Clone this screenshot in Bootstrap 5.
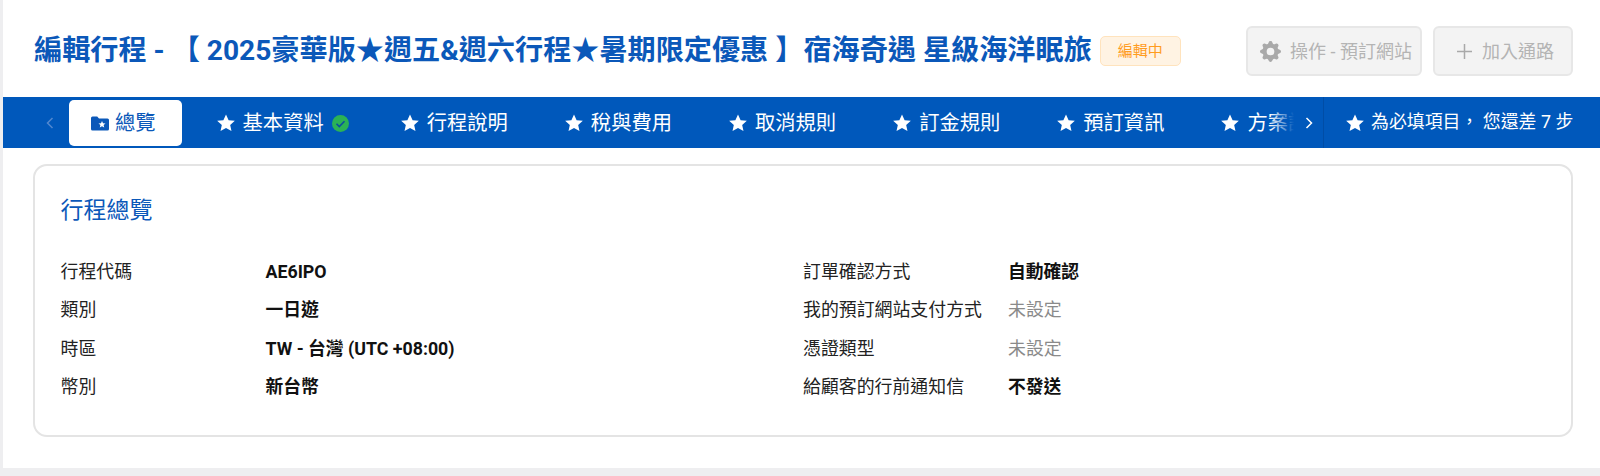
<!DOCTYPE html>
<html lang="zh-Hant">

<head>
    <meta charset="UTF-8">
    <meta name="viewport" content="width=device-width, initial-scale=1.0">
    <title>編輯行程</title>
    <link href="https://cdn.jsdelivr.net/npm/bootstrap@5.3.3/dist/css/bootstrap.min.css" rel="stylesheet">
    <style>
        body {
            background: #eeeef0;
            font-family: Roboto, "Noto Sans CJK TC", sans-serif;
            font-size: 17.9px;
            color: #222;
            overflow: hidden;
        }

        .page-wrap {
            background: #fff;
            margin-left: 2.5px;
            height: 468px;
        }

        .page-head {
            height: 97px;
            padding: 4px 27px 0 31.5px;
        }

        .page-title {
            font-size: 28.15px;
            font-weight: 700;
            color: #0b58b9;
            margin: 0;
            white-space: nowrap;
        }

        .state-tag {
            font-size: 15px;
            line-height: 28px;
            padding: 0 17px;
            margin-left: 8px;
            background: #fff3e3;
            border: 1px solid #ffe3bd;
            border-radius: 5px;
            color: #ff9c1f;
        }

        .head-btn,
        .head-btn:disabled {
            height: 50px;
            margin-top: 1px;
            font-size: 18px;
            background: #f3f3f3;
            border: 2px solid #e7e7e7;
            border-radius: 6px;
            color: #b4b4b4;
            opacity: 1;
            white-space: nowrap;
        }

        .btn-action {
            padding: 0 8px 0 12px;
            gap: 9px;
        }

        .btn-channel {
            margin-left: 10.5px;
            padding: 0 17px 0 22px;
            gap: 10.5px;
        }

        .tab-bar {
            height: 51px;
            background: #0058bb;
        }

        .tab-prev {
            width: 66.5px;
            padding-left: 43px;
        }

        .tab-scroll {
            width: 1225px;
            overflow: hidden;
        }

        .tab-scroll::after {
            content: "";
            position: absolute;
            top: 0;
            right: 0;
            bottom: 0;
            width: 24px;
            background: linear-gradient(to right, rgba(0, 88, 187, 0), #0058bb);
        }

        .tab-item {
            height: 46px;
            margin: 3px 13px 2px 0;
            padding: 0 22px;
            font-size: 20.3px;
            color: #fff;
            white-space: nowrap;
            flex-shrink: 0;
            border-radius: 5px;
            gap: 8px;
        }

        .tab-item.is-active {
            background: #fff;
            color: #0b58b9;
            padding-right: 26px;
            gap: 6px;
        }

        .tab-check {
            margin-right: -5px;
        }

        .tab-next {
            width: 30px;
            border-right: 1px solid #004da6;
        }

        .tab-summary {
            color: #fff;
            padding-left: 22px;
            gap: 7px;
            white-space: nowrap;
        }

        .info-panel {
            margin: 16px 27px 0 30.500px;
            height: 273px;
            border: 2px solid #e4e4e4;
            border-radius: 14px;
            padding: 28px 25.500px 0;
        }

        .info-title {
            font-size: 23px;
            font-weight: 400;
            color: #0b58b9;
            line-height: 34px;
            margin: 0 0 25px;
        }

        .info-row {
            height: 38.500px;
        }

        .info-label {
            width: 205px;
        }

        .info-value {
            font-size: 17.8px;
            font-weight: 700;
            color: #111;
        }

        .info-unset {
            color: #8a8a8a;
        }
    </style>
</head>

<body>
    <svg width="0" height="0" class="d-block">
        <symbol id="ic-star" viewBox="1 1 22 22">
            <path d="M12 1.5l3.2 7 7.6.8-5.7 5.1 1.6 7.5L12 18.1l-6.700 3.800 1.600-7.500L1.200 9.300l7.600-.8z" fill="currentColor"/>
        </symbol>
    </svg>
    <div class="page-wrap">
        <div class="page-head d-flex align-items-center">
            <h1 class="page-title">編輯行程 - 【 2025豪華版★週五&amp;週六行程★暑期限定優惠 】宿海奇遇 星級海洋眠旅</h1>
            <span class="state-tag">編輯中</span>
            <button class="btn head-btn btn-action d-flex align-items-center ms-auto" disabled>
                <svg width="21" height="21" viewBox="0 0 16 16" fill="#a9a9a9"><path d="M9.405 1.05c-.413-1.4-2.397-1.4-2.81 0l-.1.34a1.464 1.464 0 0 1-2.105.872l-.31-.17c-1.283-.698-2.686.705-1.987 1.987l.169.311c.446.82.023 1.841-.872 2.105l-.34.1c-1.4.413-1.4 2.397 0 2.81l.34.1a1.464 1.464 0 0 1 .872 2.105l-.17.31c-.698 1.283.705 2.686 1.987 1.987l.311-.169a1.464 1.464 0 0 1 2.105.872l.1.34c.413 1.4 2.397 1.4 2.81 0l.1-.34a1.464 1.464 0 0 1 2.105-.872l.31.17c1.283.698 2.686-.705 1.987-1.987l-.169-.311a1.464 1.464 0 0 1 .872-2.105l.34-.1c1.4-.413 1.4-2.397 0-2.81l-.34-.1a1.464 1.464 0 0 1-.872-2.105l.17-.31c.698-1.283-.705-2.686-1.987-1.987l-.311.169a1.464 1.464 0 0 1-2.105-.872l-.1-.34zM8 10.93a2.929 2.929 0 1 1 0-5.86 2.929 2.929 0 0 1 0 5.858z"/></svg>
                操作 - 預訂網站
            </button>
            <button class="btn head-btn btn-channel d-flex align-items-center" disabled>
                <svg width="15" height="15" viewBox="0 0 16 16" fill="none" stroke="#a9a9a9" stroke-width="1.6"><path d="M8 0v16M0 8h16"/></svg>
                加入通路
            </button>
        </div>

        <div class="tab-bar d-flex">
            <div class="tab-prev d-flex align-items-center">
                <svg width="8" height="12" viewBox="0 0 8 12" fill="none" stroke="#5288cf" stroke-width="1.500"><path d="M6.500 1L1.500 6l5 5"/></svg>
            </div>
            <div class="tab-scroll d-flex position-relative">
                <div class="tab-item is-active d-flex align-items-center">
                    <svg width="18" height="15" viewBox="0 0 18 15"><path d="M0 2a1.500 1.500 0 0 1 1.500-1.500h4.700L8 2.500h8.500A1.500 1.500 0 0 1 18 4v9a1.500 1.500 0 0 1-1.500 1.500h-15A1.500 1.500 0 0 1 0 13z" fill="#0b58b9"/><path d="M11 5l1 2.300 2.500.2-1.900 1.600.6 2.400-2.200-1.300-2.200 1.300.6-2.400-1.900-1.600 2.500-.2z" fill="#fff"/></svg>
                    總覽
                </div>
                <div class="tab-item d-flex align-items-center">
                    <svg width="18" height="18"><use href="#ic-star"/></svg>
                    基本資料
                    <svg class="tab-check" width="17" height="17" viewBox="0 0 17 17"><circle cx="8.500" cy="8.500" r="8.500" fill="#2bb255"/><path d="M4.500 8.700l2.800 2.800 5.200-5.200" fill="none" stroke="#0b4f9e" stroke-width="1.600"/></svg>
                </div>
                <div class="tab-item d-flex align-items-center"><svg width="18" height="18"><use href="#ic-star"/></svg>行程說明</div>
                <div class="tab-item d-flex align-items-center"><svg width="18" height="18"><use href="#ic-star"/></svg>稅與費用</div>
                <div class="tab-item d-flex align-items-center"><svg width="18" height="18"><use href="#ic-star"/></svg>取消規則</div>
                <div class="tab-item d-flex align-items-center"><svg width="18" height="18"><use href="#ic-star"/></svg>訂金規則</div>
                <div class="tab-item d-flex align-items-center"><svg width="18" height="18"><use href="#ic-star"/></svg>預訂資訊</div>
                <div class="tab-item d-flex align-items-center"><svg width="18" height="18"><use href="#ic-star"/></svg>方案設定</div>
            </div>
            <div class="tab-next d-flex align-items-center justify-content-center">
                <svg width="8" height="12" viewBox="0 0 8 12" fill="none" stroke="#fff" stroke-width="1.500"><path d="M1.500 1l5 5-5 5"/></svg>
            </div>
            <div class="tab-summary d-flex align-items-center">
                <svg width="18" height="18"><use href="#ic-star"/></svg>
                為必填項目， 您還差 7 步
            </div>
        </div>

        <div class="info-panel">
            <h2 class="info-title">行程總覽</h2>
            <div class="row g-0">
                <div class="col-6">
                    <div class="info-row d-flex align-items-center"><span class="info-label">行程代碼</span><span class="info-value">AE6IPO</span></div>
                    <div class="info-row d-flex align-items-center"><span class="info-label">類別</span><span class="info-value">一日遊</span></div>
                    <div class="info-row d-flex align-items-center"><span class="info-label">時區</span><span class="info-value">TW - 台灣 (UTC +08:00)</span></div>
                    <div class="info-row d-flex align-items-center"><span class="info-label">幣別</span><span class="info-value">新台幣</span></div>
                </div>
                <div class="col-6">
                    <div class="info-row d-flex align-items-center"><span class="info-label">訂單確認方式</span><span class="info-value">自動確認</span></div>
                    <div class="info-row d-flex align-items-center"><span class="info-label">我的預訂網站支付方式</span><span class="info-unset">未設定</span></div>
                    <div class="info-row d-flex align-items-center"><span class="info-label">憑證類型</span><span class="info-unset">未設定</span></div>
                    <div class="info-row d-flex align-items-center"><span class="info-label">給顧客的行前通知信</span><span class="info-value">不發送</span></div>
                </div>
            </div>
        </div>
    </div>
    <script src="https://cdn.jsdelivr.net/npm/bootstrap@5.3.3/dist/js/bootstrap.bundle.min.js"></script>
</body>

</html>
